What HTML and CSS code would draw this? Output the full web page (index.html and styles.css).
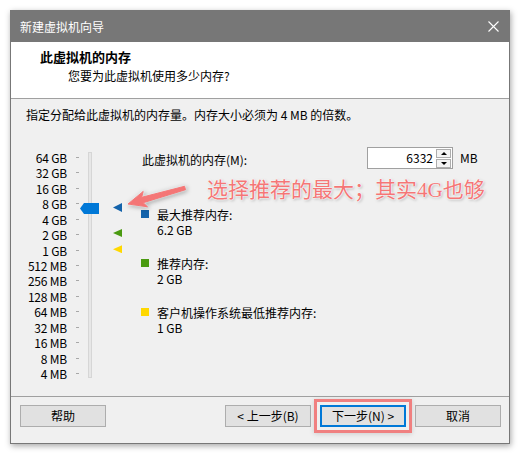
FILE: index.html
```html
<!DOCTYPE html>
<html lang="zh-CN">
<head>
<meta charset="utf-8">
<title>新建虚拟机向导</title>
<link rel="stylesheet" href="styles.css">
</head>
<body>
<div class="page">
  <div class="window">
    <div class="titlebar">
      <span class="title">新建虚拟机向导</span>
      <svg class="close" width="11" height="11" viewBox="0 0 11 11"><path d="M0.5 0.5 L10.5 10.5 M10.5 0.5 L0.5 10.5" stroke="#fff" stroke-width="1.1" fill="none"/></svg>
    </div>
    <div class="header">
      <div class="h-title">此虚拟机的内存</div>
      <div class="h-sub">您要为此虚拟机使用多少内存?</div>
    </div>
    <div class="body">
      <div class="intro">指定分配给此虚拟机的内存量。内存大小必须为 4 MB 的倍数。</div>
      <div class="main">
        <div class="slider">
          <div class="scale">
            <div class="row"><span class="lbl">64 GB</span><span class="tick"></span></div>
            <div class="row"><span class="lbl">32 GB</span><span class="tick"></span></div>
            <div class="row"><span class="lbl">16 GB</span><span class="tick"></span></div>
            <div class="row"><span class="lbl">8 GB</span><span class="tick"></span></div>
            <div class="row"><span class="lbl">4 GB</span><span class="tick"></span></div>
            <div class="row"><span class="lbl">2 GB</span><span class="tick"></span></div>
            <div class="row"><span class="lbl">1 GB</span><span class="tick"></span></div>
            <div class="row"><span class="lbl">512 MB</span><span class="tick"></span></div>
            <div class="row"><span class="lbl">256 MB</span><span class="tick"></span></div>
            <div class="row"><span class="lbl">128 MB</span><span class="tick"></span></div>
            <div class="row"><span class="lbl">64 MB</span><span class="tick"></span></div>
            <div class="row"><span class="lbl">32 MB</span><span class="tick"></span></div>
            <div class="row"><span class="lbl">16 MB</span><span class="tick"></span></div>
            <div class="row"><span class="lbl">8 MB</span><span class="tick"></span></div>
            <div class="row"><span class="lbl">4 MB</span><span class="tick"></span></div>
          </div>
          <div class="track"></div>
          <div class="thumb"></div>
          <div class="mark mark-max"></div>
          <div class="mark mark-rec"></div>
          <div class="mark mark-min"></div>
        </div>
        <div class="info">
          <div class="mem-row">
            <span class="mem-label">此虚拟机的内存(M):</span>
            <div class="spin">
              <span class="spin-value">6332</span>
              <div class="spin-btns"><span class="spin-btn up"></span><span class="spin-btn down"></span></div>
            </div>
            <span class="unit">MB</span>
          </div>
          <div class="legend">
            <div class="item"><span class="sq sq-max"></span><div class="item-text">最大推荐内存:<br>6.2 GB</div></div>
            <div class="item"><span class="sq sq-rec"></span><div class="item-text">推荐内存:<br>2 GB</div></div>
            <div class="item"><span class="sq sq-min"></span><div class="item-text">客户机操作系统最低推荐内存:<br>1 GB</div></div>
          </div>
        </div>
      </div>
    </div>
    <div class="footer">
      <button class="btn">帮助</button>
      <button class="btn back">&lt; 上一步(B)</button>
      <button class="btn primary">下一步(N) &gt;</button>
      <button class="btn">取消</button>
    </div>
  </div>
  <div class="note">选择推荐的最大；其实<span class="latin">4G</span>也够</div>
  <svg class="arrow" width="520" height="454" viewBox="0 0 520 454">
    <polygon points="128,204 147.5,206.8 143.2,202.7 185.5,189.7 184.5,186.3 141.7,197.3 143.2,191.4" fill="#f47676" stroke="#f47676" stroke-width="1" stroke-linejoin="round"/>
  </svg>
</div>
</body>
</html>
```

FILE: styles.css
```css
html, body {
  margin: 0;
  padding: 0;
  background: #ffffff;
}

.page {
  position: relative;
  width: 520px;
  height: 454px;
  padding: 10px;
  box-sizing: border-box;
  font-family: "Noto Sans CJK SC", "Noto Sans", sans-serif;
  font-size: 12px;
  color: #000;
}

.window {
  width: 500px;
  height: 434px;
  box-sizing: border-box;
  border: 1px solid #777777;
  background: #f0f0f0;
  display: flex;
  flex-direction: column;
  box-shadow: 1px 2px 6px rgba(0, 0, 0, 0.35);
}

.titlebar {
  height: 31px;
  flex: none;
  background: #777777;
  color: #ffffff;
  display: flex;
  align-items: center;
  justify-content: space-between;
  padding: 0 10px 0 9px;
  line-height: 16px;
}

.close {
  display: block;
}

.header {
  height: 57px;
  box-sizing: border-box;
  flex: none;
  background: #ffffff;
  border-bottom: 1px solid #a0a0a0;
  padding: 7px 0 0 29px;
  line-height: 16px;
}

.h-title {
  font-weight: bold;
  font-size: 13px;
}

.h-sub {
  margin-top: 3px;
  padding-left: 28px;
}

.body {
  flex: 1;
  padding: 8px 0 0 15px;
}

.intro {
  line-height: 16px;
}

.main {
  display: flex;
  margin-top: 24px;
}

.slider {
  position: relative;
  width: 96px;
  flex: none;
  display: flex;
  align-items: flex-start;
  padding-top: 2.6px;
}

.scale {
  display: flex;
  flex-direction: column;
}

.row {
  height: 15.46px;
  display: flex;
  align-items: center;
}

.lbl {
  width: 41px;
  text-align: right;
  line-height: 15px;
  white-space: nowrap;
  letter-spacing: -0.2px;
}

.tick {
  width: 3px;
  height: 1px;
  margin-left: 9px;
  background: #a8a8a8;
}

.track {
  width: 4px;
  height: 226px;
  margin-left: 9px;
  margin-top: 2.1px;
  box-sizing: border-box;
  border: 1px solid #d6d6d6;
  background: #e7e7e7;
}

.thumb {
  position: absolute;
  left: 54px;
  top: 56px;
  width: 19px;
  height: 11px;
  background: #0078d7;
  clip-path: polygon(0 50%, 4px 0, 100% 0, 100% 100%, 4px 100%);
}

.mark {
  position: absolute;
  left: 87px;
  width: 9px;
  clip-path: polygon(0 50%, 100% 0, 100% 100%);
}

.mark-max {
  top: 56px;
  height: 9px;
  background: #1463ab;
}

.mark-rec {
  top: 82px;
  height: 8px;
  background: #4a9a10;
}

.mark-min {
  top: 98.3px;
  height: 8px;
  background: #ffd800;
}

.info {
  margin-left: 19px;
  display: flex;
  flex-direction: column;
}

.mem-row {
  display: flex;
  align-items: center;
  height: 22px;
}

.mem-label {
  width: 226px;
  padding-left: 1px;
  box-sizing: border-box;
  line-height: 16px;
  margin-top: 3px;
}

.spin {
  width: 86px;
  height: 22px;
  box-sizing: border-box;
  border: 1px solid #a0a0a0;
  background: #ffffff;
  display: flex;
  align-items: stretch;
}

.spin-value {
  flex: 1;
  text-align: right;
  padding-right: 3px;
  line-height: 20px;
}

.spin-btns {
  width: 15px;
  margin-right: 1px;
  display: flex;
  flex-direction: column;
  justify-content: center;
  gap: 1px;
}

.spin-btn {
  height: 9px;
  box-sizing: border-box;
  border: 1px solid #adadad;
  background: #f3f3f3;
  display: flex;
  align-items: center;
  justify-content: center;
}

.spin-btn::after {
  content: "";
  width: 0;
  height: 0;
  border-left: 3px solid transparent;
  border-right: 3px solid transparent;
}

.spin-btn.up::after {
  border-bottom: 3px solid #000;
}

.spin-btn.down::after {
  border-top: 3px solid #000;
}

.unit {
  margin-left: 7px;
  line-height: 16px;
}

.legend {
  margin-top: 37.5px;
  display: flex;
  flex-direction: column;
  gap: 19px;
}

.item {
  display: flex;
  align-items: flex-start;
}

.sq {
  width: 8px;
  height: 8px;
  margin-top: 3px;
  margin-right: 8px;
  flex: none;
}

.sq-max { background: #1463ab; }
.sq-rec { background: #4a9a10; }
.sq-min { background: #ffd800; }

.item-text {
  line-height: 15px;
}

.footer {
  flex: none;
  height: 38px;
  border-top: 1px solid #a0a0a0;
  display: flex;
  align-items: flex-start;
  gap: 9px;
  padding: 8px 8px 0 9px;
}

.btn {
  width: 86px;
  height: 22px;
  box-sizing: border-box;
  border: 1px solid #adadad;
  background: #e1e1e1;
  font-family: "Noto Sans CJK SC", "Noto Sans", sans-serif;
  font-size: 12px;
  color: #000;
  padding: 0;
  line-height: 18px;
}

.back {
  margin-left: auto;
}

.primary {
  border: 2px solid #0078d7;
  box-shadow: 0 0 0 3px #f0f0f0, 0 0 0 6px #f08080, 0 1px 5px 6px rgba(0, 0, 0, 0.15);
}

.note {
  position: absolute;
  left: 207px;
  top: 174px;
  font-size: 21px;
  line-height: 28px;
  color: #f47676;
  white-space: nowrap;
  text-shadow: 0 0 1px #fff, 0 0 2px #fff, 0 0 2px #fff, 1px 1px 3px rgba(0, 0, 0, 0.35);
}

.latin {
  font-family: "Liberation Serif", serif;
}

.arrow {
  position: absolute;
  left: 0;
  top: 0;
  pointer-events: none;
  filter: drop-shadow(0 0 1px #fff) drop-shadow(1px 1px 2px rgba(0, 0, 0, 0.35));
}
```
